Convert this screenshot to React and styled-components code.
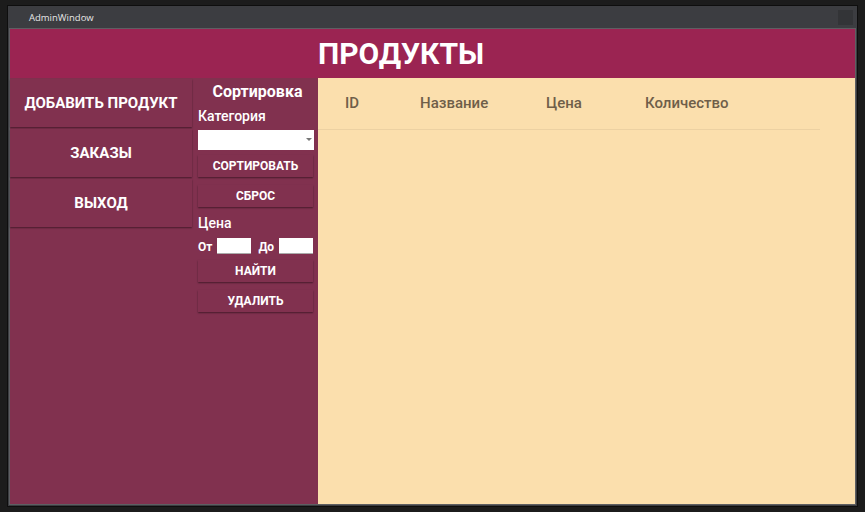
import React from 'react';
import styled, { createGlobalStyle } from 'styled-components';

const GlobalStyle = createGlobalStyle`
  html, body {
    margin: 0;
    background: #1c1c1c;
    font-family: Roboto, 'Noto Sans', sans-serif;
  }
  * { box-sizing: border-box; }
`;

const Window = styled.div`
  margin: 5px 0 0 7px;
  width: 851px;
  height: 502px;
  border: 1px solid #0e0e0e;
  background: #3c3d41;
  padding: 0 1px 1px 1px;
  display: flex;
  flex-direction: column;
`;

const TitleBar = styled.div`
  height: 22px;
  flex: none;
  display: flex;
  align-items: center;
  justify-content: space-between;
  padding: 0 3px 0 20px;
  font-family: 'Open Sans', sans-serif;
  font-size: 9.5px;
  color: #e6e6e6;
`;

const CloseBox = styled.div`
  width: 15px;
  height: 15px;
  background: #333437;
`;

const Content = styled.div`
  flex: 1;
  border: 1px solid #5e5f62;
  display: grid;
  grid-template-rows: 49px 1fr;
  min-height: 0;
`;

const Header = styled.div`
  background: #9b2452;
  color: #fff;
  font-size: 30px;
  font-weight: 700;
  display: flex;
  align-items: center;
  padding-left: 308px;
`;

const Body = styled.div`
  display: grid;
  grid-template-columns: 308px 1fr;
  min-height: 0;
`;

const Sidebar = styled.div`
  background: #81314f;
  display: grid;
  grid-template-columns: 183px 1fr;
  align-items: start;
`;

const NavColumn = styled.div`
  display: flex;
  flex-direction: column;
  gap: 2px;
  padding-top: 1px;
`;

const NavButton = styled.button`
  height: 48px;
  width: 182px;
  border: none;
  background: #81314f;
  color: #fff;
  font-family: Roboto, sans-serif;
  font-size: 15px;
  font-weight: 700;
  box-shadow: 0 1px 1.5px rgba(0, 0, 0, 0.45);
  cursor: pointer;
`;

const FilterColumn = styled.div`
  display: flex;
  flex-direction: column;
  padding: 4px 3px 0 5px;
`;

const FilterTitle = styled.div`
  color: #fff;
  font-size: 16px;
  font-weight: 700;
  text-align: center;
  padding-left: 2px;
  height: 20px;
  line-height: 20px;
`;

const Label = styled.div`
  color: #fff;
  font-size: 14px;
  font-weight: 500;
  line-height: 16px;
  margin: ${({ m }) => m || '0'};
`;

const Combo = styled.div`
  height: 20px;
  width: 116px;
  background: #fff;
  position: relative;
  margin-bottom: 5px;
  &::after {
    content: '';
    position: absolute;
    right: 2px;
    top: 8px;
    border-left: 3px solid transparent;
    border-right: 3px solid transparent;
    border-top: 3px solid #777;
  }
`;

const ActionButton = styled.button`
  height: 22px;
  width: 115px;
  border: none;
  background: #81314f;
  color: #fff;
  font-family: Roboto, sans-serif;
  font-size: 12px;
  font-weight: 700;
  box-shadow: 0 1px 1.5px rgba(0, 0, 0, 0.45);
  margin-bottom: 8px;
  padding: 0;
  cursor: pointer;
`;

const PriceRow = styled.div`
  display: flex;
  align-items: flex-end;
  height: 17px;
  margin: 6px 0 6px;
  color: #fff;
  font-size: 12px;
  font-weight: 700;
`;

const PriceLabel = styled.span`
  margin: 0 5px 0 ${({ ml }) => ml || '0'};
  line-height: 14px;
`;

const PriceInput = styled.input`
  width: 34px;
  height: 16px;
  border: none;
  border-bottom: 1px solid #aaa;
  padding: 0;
  background: #fff;
`;

const TablePanel = styled.div`
  background: #fbdfad;
`;

const TableHead = styled.div`
  width: 502px;
  height: 52px;
  display: grid;
  grid-template-columns: 75px 126px 99px 1fr;
  align-items: center;
  padding-left: 27px;
  padding-bottom: 1px;
  border-bottom: 1px solid #ecd1a2;
`;

const HeadCell = styled.div`
  color: #6f5e49;
  font-size: 15px;
  font-weight: 500;
`;

export default function App() {
  return (
    <>
      <GlobalStyle />
      <Window>
        <TitleBar>
          <span>AdminWindow</span>
          <CloseBox />
        </TitleBar>
        <Content>
          <Header>ПРОДУКТЫ</Header>
          <Body>
            <Sidebar>
              <NavColumn>
                <NavButton>ДОБАВИТЬ ПРОДУКТ</NavButton>
                <NavButton>ЗАКАЗЫ</NavButton>
                <NavButton>ВЫХОД</NavButton>
              </NavColumn>
              <FilterColumn>
                <FilterTitle>Сортировка</FilterTitle>
                <Label m="6px 0 6px">Категория</Label>
                <Combo />
                <ActionButton>СОРТИРОВАТЬ</ActionButton>
                <ActionButton>СБРОС</ActionButton>
                <Label>Цена</Label>
                <PriceRow>
                  <PriceLabel>От</PriceLabel>
                  <PriceInput />
                  <PriceLabel ml="7px">До</PriceLabel>
                  <PriceInput />
                </PriceRow>
                <ActionButton>НАЙТИ</ActionButton>
                <ActionButton>УДАЛИТЬ</ActionButton>
              </FilterColumn>
            </Sidebar>
            <TablePanel>
              <TableHead>
                <HeadCell>ID</HeadCell>
                <HeadCell>Название</HeadCell>
                <HeadCell>Цена</HeadCell>
                <HeadCell>Количество</HeadCell>
              </TableHead>
            </TablePanel>
          </Body>
        </Content>
      </Window>
    </>
  );
}
